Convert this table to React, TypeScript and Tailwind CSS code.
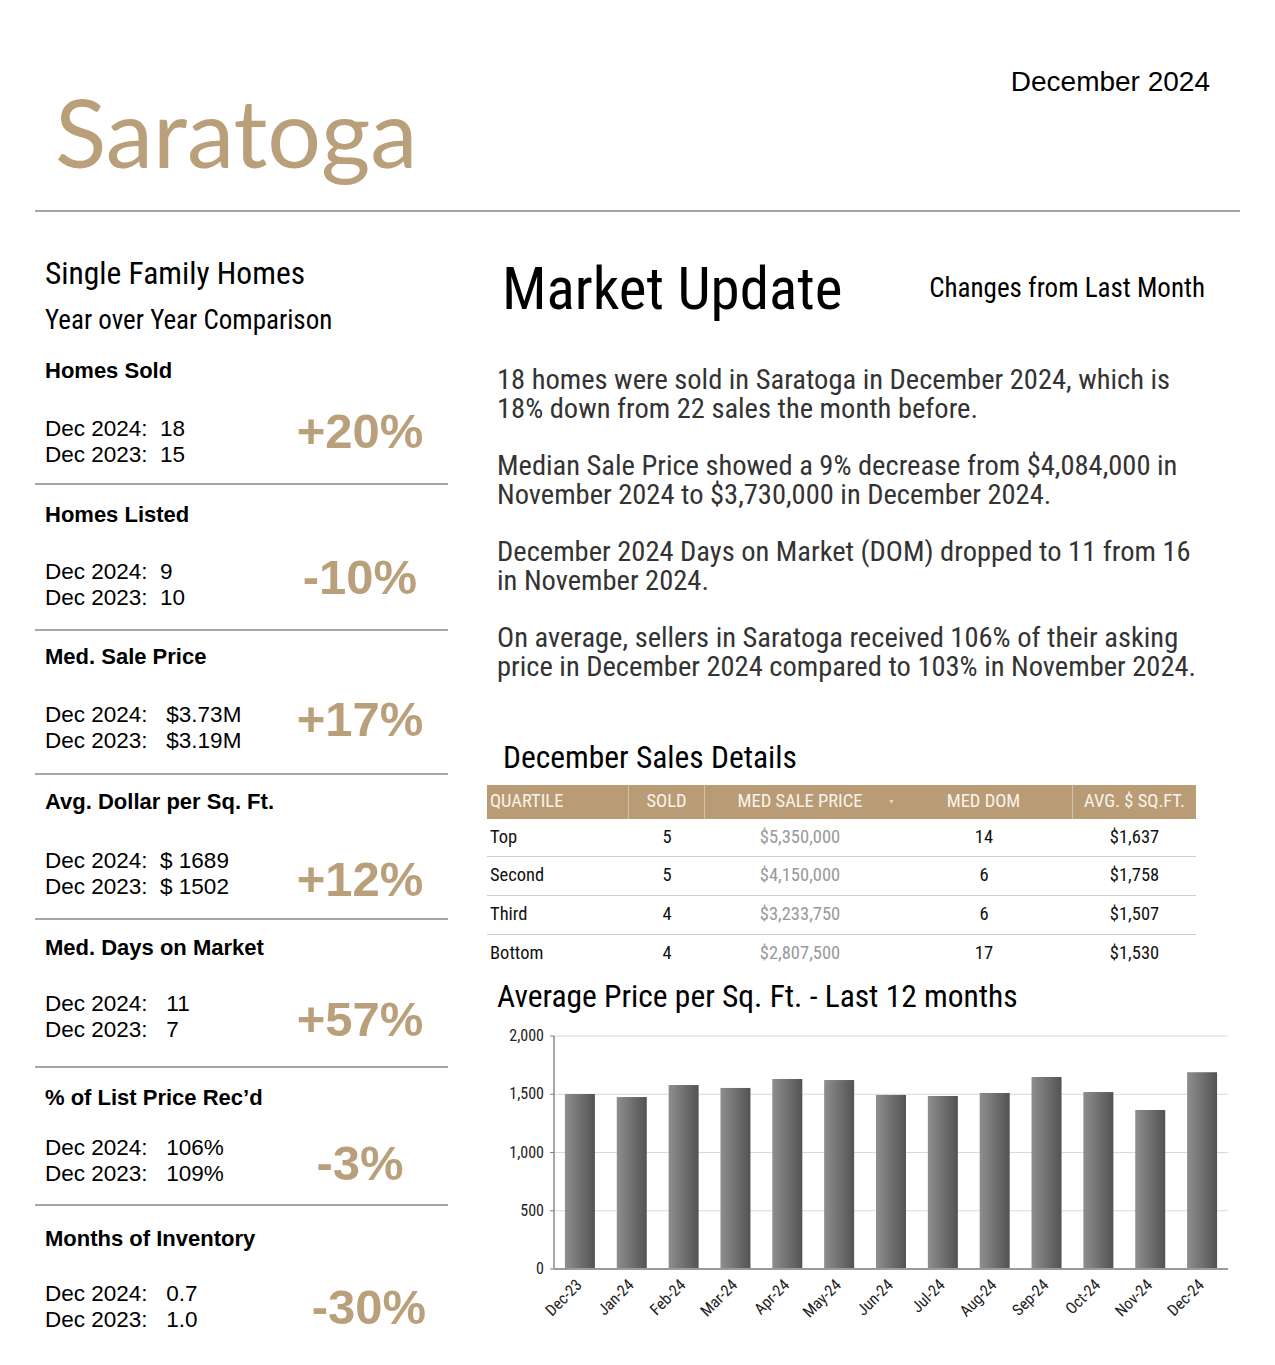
const narrow = "font-['Roboto','Liberation_Sans',sans-serif] font-stretch-[75%]";

const stats = [
  { title: 'Homes Sold', a: 'Dec 2024:  18', b: 'Dec 2023:  15', pct: '+20%', top: 'pt-[20px]', mid: 'pt-[30px]', bot: 'pb-[15px]', shift: '-mt-[22px]' },
  { title: 'Homes Listed', a: 'Dec 2024:  9', b: 'Dec 2023:  10', pct: '-10%', top: 'pt-[15px]', mid: 'pt-[29px]', bot: 'pb-[18px]', shift: '-mt-[16px]' },
  { title: 'Med. Sale Price', a: 'Dec 2024:   $3.73M', b: 'Dec 2023:   $3.19M', pct: '+17%', top: 'pt-[11px]', mid: 'pt-[30px]', bot: 'pb-[19px]', shift: '-mt-[18px]' },
  { title: 'Avg. Dollar per Sq. Ft.', a: 'Dec 2024:  $ 1689', b: 'Dec 2023:  $ 1502', pct: '+12%', top: 'pt-[12px]', mid: 'pt-[31px]', bot: 'pb-[18px]', shift: '-mb-[10px]' },
  { title: 'Med. Days on Market', a: 'Dec 2024:   11', b: 'Dec 2023:   7', pct: '+57%', top: 'pt-[13px]', mid: 'pt-[28px]', bot: 'pb-[23px]', shift: '-mb-[4px]' },
  { title: '% of List Price Rec\u2019d', a: 'Dec 2024:   106%', b: 'Dec 2023:   109%', pct: '-3%', top: 'pt-[15px]', mid: 'pt-[22px]', bot: 'pb-[17px]', shift: '-mb-[4px]' },
  { title: 'Months of Inventory', a: 'Dec 2024:   0.7', b: 'Dec 2023:   1.0', pct: '-30%', top: 'pt-[18px]', mid: 'pt-[27px]', bot: 'pb-0', shift: 'pl-[18px]' },
];

const paragraphs = [
  ['18 homes were sold in Saratoga in December 2024, which is', '18% down from 22 sales the month before.'],
  ['Median Sale Price showed a 9% decrease from $4,084,000 in', 'November 2024 to $3,730,000 in December 2024.'],
  ['December 2024 Days on Market (DOM) dropped to 11 from 16', 'in November 2024.'],
  ['On average, sellers in Saratoga received 106% of their asking', 'price in December 2024 compared to 103% in November 2024.'],
];

const quartiles = [
  { name: 'Top', sold: 5, price: '$5,350,000', dom: 14, sqft: '$1,637' },
  { name: 'Second', sold: 5, price: '$4,150,000', dom: 6, sqft: '$1,758' },
  { name: 'Third', sold: 4, price: '$3,233,750', dom: 6, sqft: '$1,507' },
  { name: 'Bottom', sold: 4, price: '$2,807,500', dom: 17, sqft: '$1,530' },
];

const months = [
  { m: 'Dec-23', v: 1502 },
  { m: 'Jan-24', v: 1476 },
  { m: 'Feb-24', v: 1579 },
  { m: 'Mar-24', v: 1554 },
  { m: 'Apr-24', v: 1631 },
  { m: 'May-24', v: 1622 },
  { m: 'Jun-24', v: 1494 },
  { m: 'Jul-24', v: 1485 },
  { m: 'Aug-24', v: 1511 },
  { m: 'Sep-24', v: 1648 },
  { m: 'Oct-24', v: 1519 },
  { m: 'Nov-24', v: 1365 },
  { m: 'Dec-24', v: 1689 },
];

function PriceChart() {
  const x0 = 67;
  const x1 = 741;
  const top = 20;
  const bottom = 253;
  const step = (x1 - x0) / 13;
  const y = (v: number) => bottom - (v / 2000) * (bottom - top);

  return (
    <svg width="753" height="326" viewBox="0 0 753 326" className="block">
      <defs>
        <linearGradient id="bar" x1="0" y1="0" x2="1" y2="0">
          <stop offset="0" stopColor="#8e8e8e" />
          <stop offset="1" stopColor="#535353" />
        </linearGradient>
      </defs>
      {[0, 500, 1000, 1500, 2000].map((v) => (
        <g key={v}>
          {v > 0 && <line x1={x0} x2={x1} y1={y(v)} y2={y(v)} stroke="#d9d9d9" strokeWidth="1" />}
          <line x1={x0 - 4} x2={x0} y1={y(v)} y2={y(v)} stroke="#7f7f7f" strokeWidth="1" />
          <text x={x0 - 10} y={y(v) + 5} textAnchor="end" className={`${narrow} text-[16px] fill-[#222]`}>
            {v.toLocaleString('en-US')}
          </text>
        </g>
      ))}
      {months.map((d, i) => {
        const cx = x0 + step * (i + 0.5);
        return (
          <g key={d.m}>
            <rect x={cx - 15} y={y(d.v)} width="30" height={bottom - y(d.v)} fill="url(#bar)" />
            <text
              x={cx + 3}
              y={bottom + 17}
              textAnchor="end"
              transform={`rotate(-45 ${cx + 3} ${bottom + 17})`}
              className={`${narrow} text-[16px] fill-[#222]`}
            >
              {d.m}
            </text>
          </g>
        );
      })}
      <line x1={x0} x2={x0} y1={top} y2={bottom} stroke="#8a8a8a" strokeWidth="1.5" />
      <line x1={x0} x2={x1} y1={bottom} y2={bottom} stroke="#9a9a9a" strokeWidth="2" />
    </svg>
  );
}

export default function App() {
  return (
    <div className="w-[1275px] h-[1365px] bg-white overflow-hidden text-black font-['Liberation_Sans',Arial,sans-serif]">
      {/* Header */}
      <header className="h-[210px] flex justify-between pl-[55px] pr-[65px]">
        <h1 className="pt-[84px] text-[95px] leading-none text-[#b9a07a] font-['Lato',sans-serif]">Saratoga</h1>
        <div className="pt-[68px] text-[28px] leading-none">December 2024</div>
      </header>
      <div className="mx-[35px] h-[2px] bg-[#a6a6a6]" />

      <div className="flex">
        {/* Year over year column */}
        <div className="ml-[35px] w-[413px]">
          <div className={`${narrow} pt-[44px] pl-[10px] text-[31.5px] leading-[36px]`}>Single Family Homes</div>
          <div className={`${narrow} mt-[12px] pl-[10px] text-[27px] leading-[32px]`}>Year over Year Comparison</div>
          {stats.map((s, i) => (
            <div
              key={s.title}
              className={`${s.top} ${s.bot} ${i < stats.length - 1 ? 'border-b-2 border-[#a6a6a6]' : ''}`}
            >
              <div className="pl-[10px] text-[22px] leading-[30px] font-bold">{s.title}</div>
              <div className={`flex items-center ${s.mid}`}>
                <div className="flex-1 pl-[10px] text-[22.5px] leading-[26px] whitespace-pre">
                  <div>{s.a}</div>
                  <div>{s.b}</div>
                </div>
                <div className={`w-[150px] mr-[13px] text-center text-[49px] leading-none font-bold text-[#b9a07a] ${s.shift}`}>
                  {s.pct}
                </div>
              </div>
            </div>
          ))}
        </div>

        {/* Market update column */}
        <div className="ml-[39px] w-[753px]">
          <div className={`${narrow} mt-[46px] h-[60px] flex items-center justify-between pl-[15px] pr-[35px]`}>
            <div className="text-[59px] leading-none whitespace-nowrap">Market Update</div>
            <div className="text-[27px] leading-none whitespace-nowrap">Changes from Last Month</div>
          </div>

          <div className={`${narrow} mt-[48px] pl-[10px] text-[28.5px] leading-[28.7px] text-[#333] flex flex-col gap-[28.7px]`}>
            {paragraphs.map((p) => (
              <p key={p[0]} className="whitespace-nowrap">
                {p[0]}
                <br />
                {p[1]}
              </p>
            ))}
          </div>

          <div className={`${narrow} mt-[58px] pl-[16px] text-[31.5px] leading-[36px]`}>December Sales Details</div>

          <div className={`${narrow} mt-[9px] w-[709px] text-[18.5px]`}>
            <div className="flex h-[34px] items-center bg-[#b99c75] text-[#f8f3ea] uppercase whitespace-nowrap">
              <div className="w-[142px] h-full flex items-center pl-[3px] border-r border-[#d3c2a8]">Quartile</div>
              <div className="w-[76px] h-full flex items-center justify-center border-r border-[#d3c2a8]">Sold</div>
              <div className="w-[190px] h-full flex items-center justify-center relative">
                Med Sale Price
                <span className="absolute right-[0px] top-[12px] text-[7px] text-[#e3d6c2]">▼</span>
              </div>
              <div className="w-[178px] h-full flex items-center justify-center border-r border-[#d3c2a8]">Med Dom</div>
              <div className="flex-1 h-full flex items-center justify-center">Avg. $ Sq.Ft.</div>
            </div>
            {quartiles.map((q, i) => (
              <div
                key={q.name}
                className={`flex h-[38.7px] items-center text-[#111] ${i < quartiles.length - 1 ? 'border-b border-[#cfcfcf]' : ''}`}
              >
                <div className="w-[142px] pl-[3px]">{q.name}</div>
                <div className="w-[76px] text-center">{q.sold}</div>
                <div className="w-[190px] text-center text-[#999]">{q.price}</div>
                <div className="w-[178px] text-center">{q.dom}</div>
                <div className="flex-1 text-center">{q.sqft}</div>
              </div>
            ))}
          </div>

          <div className={`${narrow} mt-[5px] pl-[10px] text-[31.5px] leading-[38px]`}>
            Average Price per Sq. Ft. - Last 12 months
          </div>
          <PriceChart />
        </div>
      </div>
    </div>
  );
}
